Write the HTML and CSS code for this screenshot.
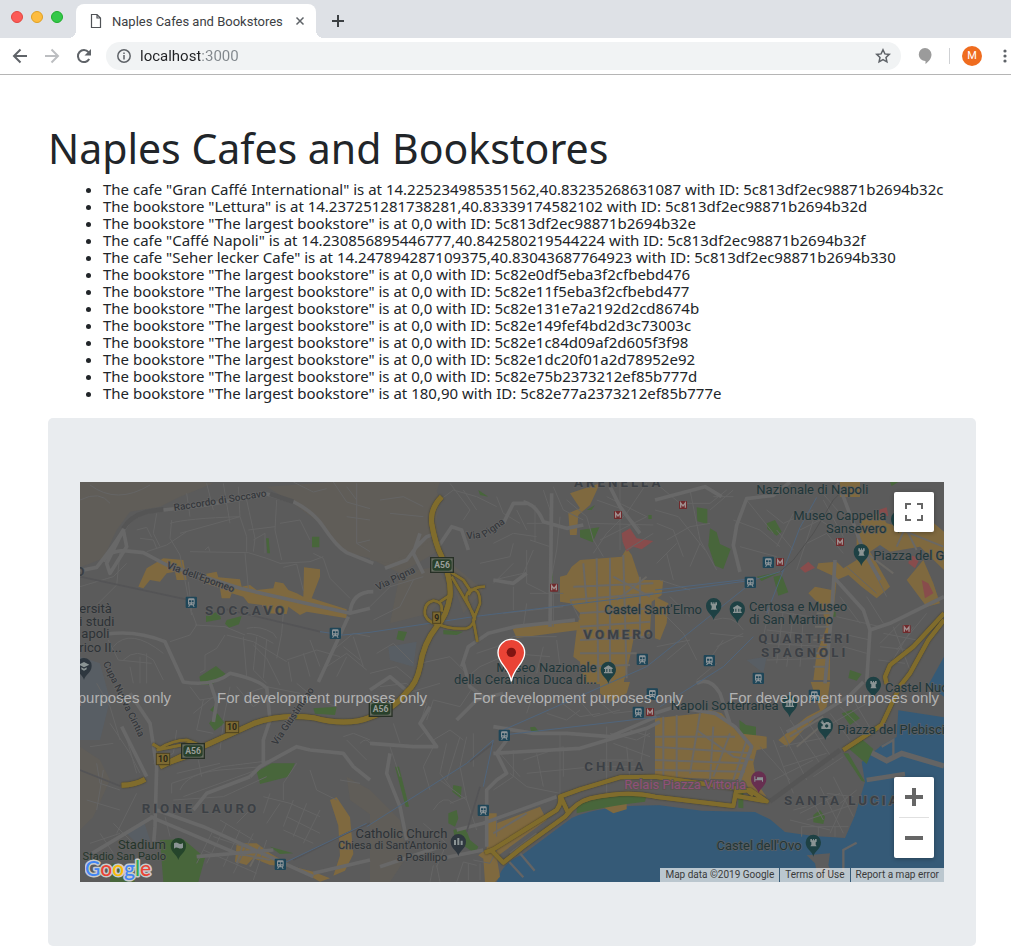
FILE: index.html
```html
<!DOCTYPE html>
<html lang="en">
<head>
<meta charset="utf-8">
<title>Naples Cafes and Bookstores</title>
<link rel="stylesheet" href="styles.css">
</head>
<body>
<header class="browser">
  <div class="tabstrip">
    <div class="lights"><span class="light red"></span><span class="light amber"></span><span class="light green"></span></div>
    <div class="tab">
      <svg class="doc" viewBox="0 0 12 16" aria-hidden="true"><path d="M1.500 1.500h5.500l3.500 3.500v9.500h-9zM7 1.500v3.500h3.500" /></svg>
      <span class="tab-title">Naples Cafes and Bookstores</span>
      <button class="bare close" aria-label="Close tab"><svg viewBox="0 0 10 10"><path d="M1.500 1.500l7 7M8.500 1.500l-7 7"/></svg></button>
    </div>
    <button class="bare newtab" aria-label="New tab"><svg viewBox="0 0 12 12"><path d="M6 0v12M0 6h12"/></svg></button>
  </div>
  <div class="toolbar">
    <button class="bare nav" aria-label="Back"><svg viewBox="0 0 16 16"><path d="M15 8H2M8.500 1.500L2 8l6.500 6.500"/></svg></button>
    <button class="bare nav dim" aria-label="Forward"><svg viewBox="0 0 16 16"><path d="M1 8h13M7.500 1.500L14 8l-6.500 6.500"/></svg></button>
    <button class="bare nav" aria-label="Reload"><svg viewBox="0 0 16 16"><path d="M13.200 11A6 6 0 1 1 12.500 4.200"/><path class="solid" d="M15 1v6.500H8.500z"/></svg></button>
    <div class="omnibox">
      <svg class="info" viewBox="0 0 14 14" aria-hidden="true"><circle cx="7" cy="7" r="6.200"/><path d="M7 6v4.500M7 3.400v1.600"/></svg>
      <input class="url" type="text" aria-label="Address" value="localhost:3000">
      <button class="bare star" aria-label="Bookmark"><svg viewBox="0 0 16 16"><path d="M8 1.800l1.900 4.100 4.400.5-3.300 3 .9 4.400L8 11.600l-3.900 2.200.9-4.400-3.300-3 4.400-.5z"/></svg></button>
    </div>
    <button class="bare chat" aria-label="Extension"><svg viewBox="0 0 14 16"><path d="M7 0a6.500 6.500 0 0 1 6.500 6.500C13.500 11 10 14 7.500 16v-3A6.500 6.500 0 1 1 7 0z"/></svg></button>
    <span class="divider"></span>
    <button class="avatar" aria-label="Profile">M</button>
    <button class="bare more" aria-label="Menu"><svg viewBox="0 0 4 14"><circle cx="2" cy="2" r="1.600"/><circle cx="2" cy="7" r="1.600"/><circle cx="2" cy="12" r="1.600"/></svg></button>
  </div>
</header>

<main class="page">
  <h1>Naples Cafes and Bookstores</h1>
  <ul class="places">
    <li>The cafe "Gran Caffé International" is at 14.225234985351562,40.83235268631087 with ID: 5c813df2ec98871b2694b32c</li>
    <li>The bookstore "Lettura" is at 14.237251281738281,40.83339174582102 with ID: 5c813df2ec98871b2694b32d</li>
    <li>The bookstore "The largest bookstore" is at 0,0 with ID: 5c813df2ec98871b2694b32e</li>
    <li>The cafe "Caffé Napoli" is at 14.230856895446777,40.842580219544224 with ID: 5c813df2ec98871b2694b32f</li>
    <li>The cafe "Seher lecker Cafe" is at 14.247894287109375,40.83043687764923 with ID: 5c813df2ec98871b2694b330</li>
    <li>The bookstore "The largest bookstore" is at 0,0 with ID: 5c82e0df5eba3f2cfbebd476</li>
    <li>The bookstore "The largest bookstore" is at 0,0 with ID: 5c82e11f5eba3f2cfbebd477</li>
    <li>The bookstore "The largest bookstore" is at 0,0 with ID: 5c82e131e7a2192d2cd8674b</li>
    <li>The bookstore "The largest bookstore" is at 0,0 with ID: 5c82e149fef4bd2d3c73003c</li>
    <li>The bookstore "The largest bookstore" is at 0,0 with ID: 5c82e1c84d09af2d605f3f98</li>
    <li>The bookstore "The largest bookstore" is at 0,0 with ID: 5c82e1dc20f01a2d78952e92</li>
    <li>The bookstore "The largest bookstore" is at 0,0 with ID: 5c82e75b2373212ef85b777d</li>
    <li>The bookstore "The largest bookstore" is at 180,90 with ID: 5c82e77a2373212ef85b777e</li>
  </ul>

  <section class="panel">
    <div class="map">
      <svg class="canvas" viewBox="0 6 2592 1200" preserveAspectRatio="xMidYMid slice" role="img" aria-label="Map of Naples">
        <defs>
          <g id="pin"><path d="M0 34C-3 18-23 12-23-9a23 23 0 0 1 46 0C23 12 3 18 0 34z"/></g>
          <g id="tower"><path class="glyph" d="M-9-19h5v4h3v-4h3v4h3v-4h5v8l-3 2v7l3 5H-9l3-5v-7l-3-2z"/></g>
          <g id="museum"><path class="glyph" d="M0-21l13 8v3h-3v9h3v4h-26v-4h3v-9h-3v-3zM-6-10v9h3v-9zM3-10v9h3v-9z" fill-rule="evenodd"/></g>
          <g id="train"><rect x="-17" y="-17" width="34" height="34" rx="3" fill="#1f4658"/><path fill="#8d9599" fill-rule="evenodd" d="M-10-8q0-4 4-4H6q4 0 4 4V4q0 3-3 4l3 5H6L4 9H-4l-2 4h-4l3-5q-3-1-3-4zM-7-6v6h6v-6zM1-6v6h6v-6zM-6 3v3h3V3zM3 3v3h3V3z"/></g>
          <g id="metro"><rect x="-12" y="-12" width="24" height="24" rx="2" fill="#702a2c"/><path d="M-7 8V-6L0 3 7-6V8" fill="none" stroke="#a09090" stroke-width="4"/></g>
        </defs>
        <rect width="2592" height="1212" fill="#5b5b5b"/>

        <g class="hill">
          <path d="M0 0H320L400 10 300 50 240 80 150 95 110 150 70 235 0 262z"/>
          <path d="M560 20L760 6H1080L1060 60 1080 210 960 280 870 235 790 215 720 130 640 70z"/>
          <path d="M960 280L1070 260 1110 330 1050 400 930 430zM1090 230L1210 330 1150 400zM870 240L930 250 1060 180 1080 60 1060 6H870z"/>
          <path d="M0 800L60 840 90 900 40 1010 0 1050zM800 890L870 930 880 1010 810 960zM870 930L960 1020 980 1130 930 1206H870zM0 950L60 960 0 1010z"/>
        </g>
        <g class="pale">
          <path d="M0 530L60 550 90 660 60 780 0 780zM925 500L1010 485 1000 560 930 540zM140 1060L190 1020 210 1080 170 1090zM2000 540L2060 530 2050 580zM2380 180L2420 160 2430 200 2400 210z"/>
        </g>

        <path class="water" d="M1250 1212Q1260 1150 1330 1122L1475 1014Q1560 975 1740 976L1865 992 2025 996 2070 1018 2115 1056 2200 1068 2295 1074 2325 1006 2355 906 2345 846 2405 796 2450 771 2455 691 2592 712V1212zM2545 615L2592 530V650z"/>
        <g class="land">
          <path d="M2180 1126L2250 1120 2245 1156 2262 1190 2215 1200 2205 1150z"/>
          <path d="M1570 982L1640 968 1640 988 1600 1000z" class="shop"/>
        </g>
        <g class="pier">
          <path d="M2340 800L2420 842 2465 820 2592 858" stroke-width="16"/>
          <path d="M2360 900L2475 882" stroke-width="14"/>
          <path d="M2290 1190V1110L2330 1088M1320 1120L1364 1172M1288 1146L1330 1192M2405 800L2440 780V830" stroke-width="7"/>
        </g>

        <g class="park">
          <path d="M558 175l8 0 4 45-8 0zM696 170h22v32h-22zM378 408l40-15 5 25-45 8zM440 420l45-12-8 25-30 10-12-12zM358 590l50-32 30 25-45 32h-30z"/>
          <path d="M1500 150l58-8-20 45-38-15zM1410 278h9v30h-9zM955 452l26 4-10 26-22-4zM1090 450l60 5-20 10-40-2zM1195 30l30 20-25-5zM1520 90l25-15-10 15zM1705 105h10v12h-10z"/>
          <path d="M1850 82l32 5v45l-30-8zM1890 145l20 12 10 35 32 15-22 60-25-10-20-60zM2060 130l25-10 20 35-15 12-28-20zM2080 290l25-5 20 52-30 10zM2030 290l75-15-60 28zM2365 280l12-5 5 15-12 4zM2310 570l35 12-15 20-25-8zM2430 6h25l-20 12zM2255 395h12v15h-12z"/>
          <path d="M387 730l25-30 22 30-30 22zM390 690l20-20-5 30zM530 875l45-25 70 0-20 40-85 22zM700 685l70-5-5 25-60-4zM240 1080l70-2 65 55-20 73H250zM570 1100l70 20-40 2zM95 1150l50 10 20 46H90zM370 606h35l-15 10z"/>
          <path d="M945 860h12l30 120-10 0zM1120 915l25 5-3 35-25-20zM1105 1000l25-10 5 25-10 25-20-10zM1120 1050l35-10 15 40 25 20-10 20-60-40zM1350 742l15-2 16 20-25 2zM1490 975Q1580 940 1700 945L1695 965Q1600 975 1490 1000z"/>
          <path d="M1978 720l20 15 30 5v35l-48-10zM2285 700l30-10 25 25-30 20zM2305 805l40-28 35 30-20 45zM2290 820l15 0 50 85-10-2zM2200 1005l20-15 15 20-5 22-30-5zM1975 935h15v50l-15-2z"/>
        </g>

        <g class="shop">
          <path d="M175 320L200 265 250 235 310 240 320 300 290 300 285 275 260 280 240 305 210 300 190 325zM360 285L410 275 415 292 480 298 485 320 510 315 530 330 580 325 585 305 610 310 625 330 650 340 670 350 672 262 720 268 720 290 695 355 800 388 800 415 680 395 660 405 625 380 620 402 560 400 545 375 505 370 490 350 455 340 450 355 425 355 420 325 365 305z"/>
          <path d="M1470 40L1560 10 1530 75 1495 105 1490 165 1470 165 1465 100 1500 85zM1500 240L1625 230 1640 205 1655 225 1680 300 1750 300 1745 345 1715 365 1710 460 1660 480 1650 530 1630 612H1510L1500 545 1480 530 1490 450 1500 400 1470 370 1440 365 1440 290 1460 285 1475 260z"/>
          <path d="M1295 440L1495 425V450L1310 474zM1560 606L1650 606 1640 640 1590 665 1560 640z"/>
          <path d="M2280 6h60v45h-60zM2480 60L2592 155V270L2520 200 2430 215 2400 195 2370 215 2390 250 2430 320 2390 355 2345 320 2305 285 2270 300 2260 400 2250 480 2250 600 2200 600 2210 520 2240 440 2225 380 2185 340 2205 320 2255 330 2265 290 2210 265 2215 250 2270 245 2290 265 2330 240 2330 170 2350 110 2400 100 2420 130 2440 135 2480 155z"/>
          <path d="M2480 300L2530 240 2560 310 2580 370 2540 380zM1725 350l40 20-5 60-20 50-15-5z"/>
          <path d="M2192 606L2250 606 2240 680 2120 800 2095 780 2180 710 2220 690zM1725 715L1865 700 1890 690 1925 700 1975 760 2060 770 2060 805 2030 810 2020 850 2030 910 2060 950 2010 930 1990 900 1725 890z"/>
          <path d="M470 1090l60 0 40 30 70 40-70-5-50-20-20 20-35-10zM640 1160l60 15 50 20-30 10zM750 960l20-8 40 60 10 110-25 50-35 15 20-60-5-90z"/>
          <path d="M1225 1000h25l0 30 130-50 20 40-150 110 10 60-15 16h-30l-5-70-15-10 25-20z"/>
        </g>
        <g class="rose"><path d="M1625 160l25-15 20 30 50 8-35 25-25-8-20 15-12-30zM2160 265l25-20 20 18-30 15zM2525 300l20 10 15 30-25 15zM2490 225l30 10-15 30-20-15zM2395 90l25-8 5 25-25 5z"/></g>

        <g class="street">
          <path d="M170 150l30-8 15 30M180 175l40 5 10 25M230 100l-10 60 20 40M275 120l-5 55 30 50 35 180M270 130Q320 115 480 110l-5-90M300 160l180-50M480 110l20 60v45M320 40l10 70M380 10l20 80M430 10l20 120M500 60l25 115-5 40M330 215L505 218 560 235 600 250 690 245M505 150l80-10M520 180l35-20v60M590 60l-5 90 20 90M600 130l60-10 30 60M700 220l30 15 20 60 60 60M690 245l40-15M610 262l40-10 20 80M495 220l10 105M325 305l10 90 15 40M345 435l90 5 60 25M270 485l60-20 20-30M435 465l-25 40-35 20v45l-15 8M440 465l80 20 100 60M490 470l10 120M520 495l40 40 40 80M530 470l-10 100 40 40M560 480l-10 115M610 400l-5 60-15 75M500 445q40-10 80 15l10 15M500 460q30 0 80 30M620 540l90-30 70 20M625 545l10 60M670 520l20 70M690 480l30 80M760 510l60-50 50 10M790 500l50 40M740 560l60-40 60 50M770 590l30-60M820 470l30 90M85 480l30 60 100 10M130 540q40-40 90 0l30 60M150 560l10 50M180 530v80M200 520v90M100 500q50-60 150 20M0 320l100-30 40-40M120 215l-10 100-60 60M200 215l60-20 60-40M375 210l10-10 5 15"/>
          <path d="M760 6l40 60 70 20M800 20l30 40M830 10v180l40-10M800 110l70 10M830 190l40 25M640 6l60 30 40-10M0 60q60-30 90 10M30 15q80 60 180 0"/>
          <path d="M1080 60l40-30 70 20 60 30M1110 10l60 80-20 30M1150 30l40 60M1250 50l20 50 50 30M1310 90l30 60M1340 130h75M1365 75v110M1350 180l60 20M1390 30l20 60v100M1420 20l30 70 60 30M1440 110l-10 100-15 80M1460 60l60 50 20 70 30 50M1550 60l70 25 60 60M1620 10v200M1580 50l120 60M1700 10l-60 90-60 60-40 60M1530 130l190 5M1560 180l140-70M1640 210l80-50M1240 190l60-30 70 10M1200 250l90-20 10-40M1240 300l90-20 30-70M1240 310l60-60M1340 210v100l60 30M1300 320v70M1350 340h100M1270 400l180-20M1330 440l10-70M1420 440V340M1500 420l-30-60M1190 520l60-20 50-30 130 0M1200 560l90-40 120 10M1280 600l40-80M1370 580l20-80M1440 560l-10-80M1150 600l50-40M870 380l60-60 100-30M880 420l80-40 40-80M900 60l70-10 60 30M930 100l100 10M890 520l50-30 60 60M870 580l80-20 60 50M1020 550l90-20 60 60"/>
          <path d="M1740 20l60 50 90 0 50-40M1725 90l70 20 80 100M1730 130l50 20 30 80M1760 180l70-40 60-10M1730 250l60-60M1780 300l-20-80M1830 260l30-70M1740 300l90 30M1770 350l60 60M1830 30l30 150 50 90M1890 90l70-60M1900 50l60 0M1960 120l80 30 60 50M1980 200l110 30M2000 60l80 100M2060 90l50 40 90-40M2090 150l50 60M2140 100l-50 100M2160 150l60-30 60 40M2180 190l60-30 50 60M2200 120l-50 150M2230 60l60 110M2220 30l60 70 70 10M2070 380l-20 90M2060 390l130 20M2110 390l-20 160M2140 400l-20 160M2170 410l-10 150M2060 450l190 20M2055 490l190 10M2060 540l180-5M2270 410l130 30M2280 460l90 20M2290 500l70 20M2360 350l50 80M2280 350l60 80M2390 290l30 60M2300 260l90 80M2440 440l50 130M2410 460l100 20M2400 500l90 10M2395 540l80 10M2460 430l-60 60M2500 440l-80 130M2540 400l-90 110M1750 400l60 60 40 80M1730 500l100-20M1760 540l60-50M1900 420q60-20 90 30M1890 460l100 10M1910 500l80-40M1880 550l50-70M1850 600l60-50"/>
          <path d="M50 610l40 70 30 100M90 730l60 90 30 60M130 740l40 140M30 800l70-10M50 850l10 60 60 20M70 870l-20 120M20 960l100 30M30 1090l90-30M60 1060l40 60M100 1030l60 60M170 940l-60 120M290 750l-10 70-60 30M330 620l30 40 60-10M340 700l60-50M370 660l-20 90 50 10M450 620l-20 100M470 620l50 60M275 940l0-30 150-50 160-20M290 880l130-30M300 930q20-50 120-60l130-10M310 950l220-80M280 960l150-10 130-60M355 840l10 50M430 730l-10 80M500 640l60-20 100 20M520 680l40-30M610 650l70 0M650 610l60 50 60 20M650 850l-40 60 0 50M690 870l20 60 60 30M550 950l80 20 90 40M600 970l-40 60M570 940l-20 60M640 960l-30 80M680 970l-40 100M720 990l-50 100M620 1010l100 50M610 1050l90 40M400 1050l-50 100M440 1030l-60 120M480 1050l-50 110M520 1060l-60 120M560 1080l-40 120M370 1110l160 70M400 1070l150 50M420 1020l100 60M470 1030l40-40M790 770l30-10 50 20M800 780l60 60M840 790q20-20 30 0M780 900l60 10M255 1010l15 60"/>
          <path d="M900 620l80-10 60 60-20 60M980 640l100-30M1040 720l20-60 80 20 40-60M1060 780l50-30 40 30M1010 780l30-30M1060 800l-30 60 20 70M1100 790l-20 90 30 40M1140 770l-40 130M1160 770l-20 90 20 100M1180 760l0 100M1080 900l80 60 30 90M1110 970l50-20M1060 990q30-50 60-20M1030 1030l70 60-30 70M930 800l30 90M940 730l20 60M1260 820l60 70M1300 810v80l-60 40M1330 840l120-40 0 90M1370 820l20 100M1340 880l200-20M1290 880l50 40 100 20M1440 760v200M1580 740v200M1640 800l10 100M1700 740l-20 120M1560 840h100M1550 860h120M1600 790l110 40M1650 750l60 20M1400 700l60 20 40-30M1420 650l80 60 60-10M1480 640l60 70 80-20M1530 640l70 60 90-10M1360 640l-20 60M1590 760l80 20 40-20M1180 1140l50 10 30-60M1130 1206l20-60 40 10M1165 1200v-50M1200 1200v-50M1080 1206l-10-50M1050 1206l10-50M1250 1010v60"/>
          <path d="M2080 780l60 160M2040 800l90 100M2100 740l80 160M2130 720l90 130M2180 720l80 120M2100 800l150-30M2110 860l130-40M2080 900l120-60M2290 830l-90 60M2180 1020l150-50M2160 1000l120-60M2220 920l70 140M2260 890l60 120M2190 950l40 70M2130 1020l120 30M2140 990l40-10M2165 1040h140M2165 1040v30M2215 1040v30M2265 1040v30M2240 940l80 10M2280 970l50-40M2250 1060l50-110M2240 740l120-70M2250 700l60 80M2320 660l60 100M2280 680l60 60"/>
        </g>
        <g class="street block">
          <path d="M1510 250l10 120M1550 235l5 370M1590 235l0 370M1630 225l10 370M1480 320l240-10M1470 360l250-20M1500 400l210-15M1500 440l210-15M1500 480l200-10M1500 520l170 0M1500 560l150-5M1600 290l110 60M1700 290l-90 70M1680 290v180M1725 770l240 0M1725 800l290 20M1750 710l0 180M1790 705l0 190M1860 700l-30 180M1900 740l-10 160M1950 760l-50 130M2000 780l-40 120M1725 840l270 10M1725 870l270 5M1850 750l110 80 60 10M2130 770l100-60M2150 800l70-60M2360 220l80 60M2450 90l60 120M2500 90l-50 110M2440 140l150 60M2260 400h-50M2255 440h-50M2250 480h-50M2245 520h-40M2245 560h-45M470 1120l100 20M490 1090l-20 60M540 1100l-30 60M1240 1060l100-60M1280 1080l100-60M1290 1120l80-60"/>
        </g>
        <g class="road">
          <path d="M0 272L50 262Q100 200 130 150Q150 110 200 95L250 90 380 75 560 42 640 65Q700 95 730 140 770 200 800 218L880 250M70 245Q80 215 130 212L190 218 260 255 480 325 810 400 870 385M130 150l-50 100 10 30 50-80-10-50M80 462Q170 450 255 485L310 606Q400 620 450 580 540 600 560 625M810 400Q815 335 880 335M805 410L715 606"/>
          <path d="M915 265L980 240 1010 200 1040 170 1070 160M1020 160l-20 60 30 60M1075 200l40-60 30 10 20 60M1330 65q40 10 60 60l70 20 50-10M1270 130l30-60 40 0M1415 40l-5 400M1145 560l20-60 60-40 80-20 180-20M1150 550l20 70 40 30M1240 300l60 10 40-30M1590 20l30 60 60 80"/>
          <path d="M2130 6l-50 40-80 10-30 80-10 60 20 80M1725 60l150-40 50 30M2270 10l20 40 60 160 50 90M2265 240l-10 160-20 210M2592 350L2430 430 2370 450 2360 606M2370 450l-20-60-90-100"/>
          <path d="M150 640l60 90 20 130-5 180-5 60M125 740l75 150M230 990l140 50 330 150M220 1010L20 1130M470 1120l-260-110M690 810l-40-10-110 60-30 30M870 900l-50-40-30-40-100-10M390 606l20 60-10 60M560 620l10 100-20 60v70M510 890l-130 50-40 50M870 1140l-170 40M350 1130l230-20"/>
          <path d="M870 790l130 10 70 0-50-70 30-50M930 820l-10 60 40 100 20 100M870 630l60-40 60 50M1220 1100V930l30-30 30-20-30-60 30-40V740M1240 820l260-15 200-60 40-20M1060 1140l150-30M1130 1050l80-20 220-80M900 1160l180-60M1240 740l120 20 100 0 130 10 140-60M1130 720l60-60 80-20"/>
          <path d="M1725 700l60-20 120 20 60 40 50 60-40 110M1850 610q40-20 70 30l30 90M2350 606l-40 40-80 50-110 60"/>
        </g>
        <path class="tunnel" d="M130 145Q150 110 200 95L250 88M570 42L640 65M2070 964L2280 810"/>
        <g class="rail"><path d="M0 290L350 365M440 388L720 455M0 870L120 918M1170 845L1240 790M1160 1055L1200 920M640 1140L800 1060 870 1030"/></g>
        <g class="transit">
          <path d="M720 455l70 10 80-8L1180 410 1650 352 2020 300 2110 272M2110 272L2060 400M2110 272l50-130 50-90M1270 750L1700 560 2000 320M1270 765L1740 710M1240 780l-30 140M860 1040L1160 850 1240 780M600 1155L860 1030M1725 330L2000 298M1740 680l190-120 90-90"/>
        </g>
        <path d="M2100 275L2140 240 2200 160 2260 60 2300 20" fill="none" stroke="#505050" stroke-width="3"/>

        <g class="edge"><use href="#highways"/></g>
        <g class="gold" id="highways">
          <path d="M1085 50Q1050 85 1055 130 1065 190 1085 230 1115 300 1110 350 1100 410 1070 440 1030 490 1020 560 1010 610 980 636 940 690 870 712 800 740 700 713 600 701 520 731L300 831 240 860M195 898Q165 915 125 916" stroke-width="15"/>
          <path d="M1110 275L1150 300 1170 330M1115 290L1185 410Q1180 440 1160 445 1110 450 1070 430M1085 435Q1045 430 1035 405 1030 370 1060 362 1090 365 1085 395M1080 365l30-20M1165 370Q1150 350 1170 330 1200 320 1200 370L1180 420 1192 485M1165 345Q1175 320 1215 320M1165 370l20 50" stroke-width="7"/>
          <path d="M218 792L240 805Q280 780 320 780L370 800M230 810L330 790M240 860L340 825" stroke-width="8"/>
          <path d="M1215 1118L1240 1108 1430 990Q1445 970 1440 950L1500 928 1620 892 1725 890 2000 930 2020 945M1235 1112L1270 1148 1330 1100 1455 1010Q1490 965 1530 955 1640 930 1725 950L1960 978 1968 935 2010 930 2060 964 1970 948M1440 945l25 55" stroke-width="12"/>
          <path d="M2592 400L2500 500 2430 555 2415 590 2420 612M2592 420L2545 480 2490 580 2460 618 2405 735 2290 810" stroke-width="12"/>
        </g>

        <g class="area">
          <text x="375" y="404">SOCCAVO</text>
          <text x="1482" y="20">ARENELLA</text>
          <text x="1510" y="476">VOMERO</text>
          <text x="2035" y="489">QUARTIERI</text>
          <text x="2043" y="531">SPAGNOLI</text>
          <text x="1513" y="873">CHIAIA</text>
          <text x="185" y="1000">RIONE LAURO</text>
          <text x="2112" y="975">SANTA LUCIA</text>
          <text x="-14" y="288">O</text>
        </g>
        <g class="way">
          <text transform="translate(283 93) rotate(-9)">Raccordo di Soccavo</text>
          <text transform="translate(258 264) rotate(20)">Via dell'Epomeo</text>
          <text transform="translate(1160 178) rotate(-6)">Via</text><text transform="translate(1214 174) rotate(-36)">Pigna</text>
          <text transform="translate(893 332) rotate(-26)">Via Pigna</text>
          <text transform="translate(68 550) rotate(64)">Cupa Nuova Cintia</text>
          <text transform="translate(590 798) rotate(-56)">Via Giustiniano</text>
        </g>
        <g class="poi gray">
          <text x="-2" y="399">ersità</text><text x="-2" y="439">i studi</text><text x="4" y="475">apoli</text><text x="-2" y="517">rico II...</text>
          <text x="1102" y="1073" text-anchor="end">Catholic Church</text>
          <text class="minor" x="1102" y="1108" text-anchor="end">Chiesa di Sant'Antonio</text>
          <text class="minor" x="1102" y="1142" text-anchor="end">a Posillipo</text>
        </g>
        <g class="poi forest">
          <text x="258" y="1107" text-anchor="end">Stadium</text>
          <text class="minor" x="258" y="1139" text-anchor="end">Stadio San Paolo</text>
        </g>
        <g class="poi teal">
          <text x="1550" y="575" text-anchor="end">Museo Nazionale</text>
          <text x="1550" y="612" text-anchor="end">della Ceramica Duca di...</text>
          <text x="1866" y="402" text-anchor="end">Castel Sant'Elmo</text>
          <text x="2007" y="392">Certosa e Museo</text><text x="2007" y="431">di San Martino</text>
          <text x="2029" y="43">Nazionale di Napoli</text>
          <text x="2419" y="119" text-anchor="end">Museo Cappella</text><text x="2419" y="158" text-anchor="end">Sansevero</text>
          <text x="2380" y="239">Piazza del Gesù</text>
          <text x="2415" y="636">Castel Nuovo</text>
          <text x="2096" y="691" text-anchor="end">Napoli Sotterranea</text>
          <text x="2272" y="761">Piazza del Plebiscito</text>
          <text x="2165" y="1109" text-anchor="end">Castel dell'Ovo</text>
        </g>
        <g class="poi plum"><text x="1998" y="926" text-anchor="end">Relais Piazza Vittoria</text></g>

        <g fill="#1e4144">
          <use href="#pin" x="1585" y="577"/><use href="#museum" x="1585" y="577"/>
          <use href="#pin" x="1901" y="386"/><use href="#tower" x="1901" y="386"/>
          <use href="#pin" x="1972" y="396"/><use href="#museum" x="1972" y="396"/>
          <use href="#pin" x="2344" y="224"/><use href="#tower" x="2344" y="224"/>
          <use href="#pin" x="2456" y="126"/>
          <use href="#pin" x="2380" y="622"/><use href="#tower" x="2380" y="622"/>
          <use href="#pin" x="2129" y="678"/><use href="#museum" x="2129" y="678"/>
          <use href="#pin" x="2236" y="746"/><path class="glyph" fill-rule="evenodd" d="M2228 729h7l3-3h8l3 3h3v18h-28v-8h4zM2240 733a5 5 0 1 0 .1 0zM2222 725h3v-4h3v4h4v3h-4v4h-3v-4h-3z"/>
          <use href="#pin" x="2200" y="1096"/><use href="#tower" x="2200" y="1096"/>
        </g>
        <g fill="#2e373f"><use href="#pin" x="1135" y="1094"/><path class="glyph" d="M1122 1080h6v15h-6zM1132 1074h6v21h-6zM1142 1082h6v13h-6z"/><use href="#pin" x="12" y="566"/><path class="glyph" d="M-4 554l16-8 16 8-16 8zM4 562l8 4 8-4v6l-8 4-8-4z"/></g>
        <g fill="#25452b"><use href="#pin" x="295" y="1106"/><path class="glyph" d="M282 1090q7-5 13 0t14-1v14q-7 5-14 1t-13 2z"/></g>
        <g fill="#672f50"><use href="#pin" x="2036" y="906"/><path class="glyph" d="M2023 889h3v9h5v-6h18v13h-3v-4h-20v4h-3z"/></g>

        <use href="#train" x="334" y="367"/><use href="#train" x="766" y="460"/><use href="#train" x="1687" y="538"/><use href="#train" x="2065" y="247"/><use href="#train" x="2011" y="307"/><use href="#train" x="1888" y="542"/><use href="#train" x="2035" y="595"/><use href="#train" x="1273" y="766"/><use href="#train" x="1675" y="697"/><use href="#train" x="1717" y="642"/><use href="#train" x="2203" y="646"/><use href="#train" x="1210" y="991"/><use href="#train" x="601" y="1153"/>
        <use href="#metro" x="1614" y="105"/><use href="#metro" x="1422" y="323"/><use href="#metro" x="1809" y="75"/><use href="#metro" x="2280" y="186"/><use href="#metro" x="2100" y="246"/><use href="#metro" x="2480" y="447"/><use href="#metro" x="1710" y="696"/>

        <g class="shield">
          <g transform="translate(1086 255)"><rect class="rim" x="-34" y="-22" width="68" height="44"/><rect class="core" x="-29" y="-17" width="58" height="34" rx="9"/><text y="9">A56</text></g>
          <g transform="translate(339 813)"><rect class="rim" x="-34" y="-22" width="68" height="44"/><rect class="core" x="-29" y="-17" width="58" height="34" rx="9"/><text y="9">A56</text></g>
          <g transform="translate(902 687)"><rect class="rim" x="-34" y="-22" width="68" height="44"/><rect class="core" x="-29" y="-17" width="58" height="34" rx="9"/><text y="9">A56</text></g>
        </g>
        <g class="exit">
          <g transform="translate(1070 413)"><rect x="-12" y="-17" width="24" height="34"/><text y="9">9</text></g>
          <g transform="translate(456 741)"><rect x="-20" y="-17" width="40" height="34"/><text y="9">10</text></g>
          <g transform="translate(249 837)"><rect x="-20" y="-17" width="40" height="34"/><text y="9">10</text></g>
        </g>

        <g class="watermark">
          <text x="-357" y="670">For development purposes only</text>
          <text x="411" y="670">For development purposes only</text>
          <text x="1179" y="670">For development purposes only</text>
          <text x="1947" y="670">For development purposes only</text>
        </g>
        <path d="M1294 604C1288 564 1254 551 1254 518a40 40 0 0 1 80 0C1334 551 1300 564 1294 604z" fill="#ea4335" stroke="#fff" stroke-width="4"/>
        <circle cx="1294" cy="517" r="14" fill="#811411"/>
      </svg>
      <a class="brand" href="#google" aria-label="Google"><svg viewBox="0 0 68 26"><text x="0" y="20"><tspan class="b">G</tspan><tspan class="r">o</tspan><tspan class="y">o</tspan><tspan class="b">g</tspan><tspan class="g">l</tspan><tspan class="r">e</tspan></text></svg></a>
      <button class="control fullscreen" aria-label="Toggle fullscreen view"><svg viewBox="0 0 18 18"><path d="M0 6V0h6v2H2v4zM12 0h6v6h-2V2h-4zM0 12v6h6v-2H2v-4zM16 12v4h-4v2h6v-6z"/></svg></button>
      <div class="control zoom">
        <button aria-label="Zoom in"><svg viewBox="0 0 18 18"><path d="M7 0h4v7h7v4h-7v7H7v-7H0V7h7z"/></svg></button>
        <span class="rule"></span>
        <button aria-label="Zoom out"><svg viewBox="0 0 18 18"><path d="M0 7h18v4H0z"/></svg></button>
      </div>
      <div class="credits"><span>Map data ©2019 Google</span><a href="#terms">Terms of Use</a><a href="#report">Report a map error</a></div>
    </div>
  </section>
</main>
</body>
</html>
```
FILE: styles.css
```css
* { box-sizing: border-box; }
body { margin: 0; background: #fff; color: #212529; font-family: "Noto Sans", sans-serif; }
svg { display: block; }
button { font: inherit; cursor: pointer; }

/* Browser bars */
.browser { font-family: Roboto, sans-serif; border-bottom: 1px solid #b5b5b5; }
.bare { border: 0; padding: 0; background: none; flex: none; color: #5f6368; }
.bare svg { width: 100%; fill: none; stroke: currentColor; stroke-width: 2; }
.tabstrip { display: flex; height: 38px; padding-top: 4px; background: #dee1e6; }
.lights { display: flex; gap: 8px; width: 76px; padding: 7px 0 0 11px; }
.light { width: 12px; height: 12px; border-radius: 50%; }
.red { background: #fc5b57; border: 1px solid #e2463f; }
.amber { background: #fdbc40; border: 1px solid #dfa023; }
.green { background: #34c84a; border: 1px solid #1dad2b; }
.tab { display: flex; align-items: center; width: 240px; padding: 0 11px 0 14px; background: #fff; border-radius: 8px 8px 0 0; position: relative; }
.tab::before, .tab::after { content: ""; position: absolute; bottom: 0; width: 8px; height: 8px; }
.tab::before { left: -8px; background: radial-gradient(circle at 0 0, transparent 8px, #fff 8px); }
.tab::after { right: -8px; background: radial-gradient(circle at 100% 0, transparent 8px, #fff 8px); }
.doc { width: 12px; height: 16px; fill: none; stroke: #505357; stroke-width: 1.2; }
.tab-title { flex: 1; margin-left: 10px; font-size: 13px; color: #3c4043; white-space: nowrap; }
.close { width: 10px; height: 10px; }
.close svg { stroke-width: 1.5; }
.newtab { width: 12px; height: 12px; margin: 11px 0 0 16px; color: #3c4043; }
.toolbar { display: flex; align-items: center; height: 36px; padding: 0 4px 0 12px; }
.nav { width: 16px; height: 16px; margin-right: 16px; }
.nav .solid { fill: currentColor; stroke: none; }
.dim { color: #bcbec1; }
.omnibox { display: flex; align-items: center; flex: 1; height: 28px; margin-left: -2px; padding: 0 10px; border-radius: 14px; background: #f1f3f4; }
.info { width: 14px; height: 14px; margin-left: 1px; fill: none; stroke: #5f6368; stroke-width: 1.5; }
.url { flex: 1; min-width: 0; margin-left: 9px; padding: 0; border: 0; outline: 0; font: 15px/20px Roboto, sans-serif; color: transparent; background: linear-gradient(90deg, #202124 60px, #80868b 60px); -webkit-background-clip: text; background-clip: text; }
.star { width: 16px; height: 16px; }
.star svg { stroke-width: 1.5; }
.chat { width: 14px; height: 16px; margin-left: 17px; }
.chat svg { fill: #9b9b9b; stroke: none; }
.divider { width: 1px; height: 16px; margin: 0 12px 0 17px; background: #cfd1d4; }
.avatar { width: 20px; height: 20px; padding: 0; border: 0; border-radius: 50%; background: #ef6c1f; color: #fff; font-size: 11px; line-height: 20px; }
.more { width: 4px; margin-left: 21px; }
.more svg { fill: #5f6368; stroke: none; }

/* Page */
.page { padding: 48px 35px 5px 48px; }
h1 { margin: 0 0 8px; font-size: 41px; line-height: 50px; font-weight: 400; }
.places { margin: 0 0 16px; padding-left: 55px; font-size: 15px; line-height: 17px; }
.panel { padding: 64px 32px; border-radius: 5px; background: #e9ecef; }

/* Map */
.map { position: relative; height: 400px; overflow: hidden; background: #5b5b5b; font-family: Roboto, sans-serif; }
.canvas { width: 100%; height: 100%; }
.hill { fill: #605d58; }
.pale { fill: #56616a; opacity: .6; }
.water { fill: #355a77; }
.land { fill: #5c5c5c; }
.pier { fill: none; stroke: #646464; }
.park { fill: #48663b; }
.shop { fill: #7f693f; }
.rose { fill: #884c4c; }
.street { fill: none; stroke: #656565; stroke-width: 3; stroke-linejoin: round; }
.block { stroke: #6a6864; stroke-width: 6; }
.road { fill: none; stroke: #686868; stroke-width: 11; stroke-linejoin: round; }
.tunnel { fill: none; stroke: #555; stroke-width: 14; }
.rail { fill: none; stroke: #545456; stroke-width: 5; }
.transit { fill: none; stroke: #50657c; stroke-width: 3; }
.gold { fill: none; stroke: #806c2c; stroke-linejoin: round; }
.edge { filter: drop-shadow(0 0 3px #40391c); }
.area { font-size: 40px; font-weight: 700; letter-spacing: 9px; fill: #3c4045; stroke: #606060; stroke-width: 4; paint-order: stroke; }
.way { font-size: 30px; font-weight: 500; fill: #35383c; stroke: #656565; stroke-width: 4; paint-order: stroke; }
.poi { font-size: 39px; stroke: #5f5f5f; stroke-width: 4; paint-order: stroke; }
.minor { font-size: 33px; }
.gray { fill: #2d3236; }
.forest { fill: #24352a; }
.teal { fill: #203639; }
.plum { fill: #90507a; stroke: #5a5650; stroke-width: 6; }
.glyph { fill: #8b9494; }
.shield text, .exit text { text-anchor: middle; font-size: 26px; font-weight: 700; }
.rim { fill: #666d61; stroke: #273026; stroke-width: 4; }
.core { fill: #29402b; }
.shield text { fill: #999e99; }
.exit rect { fill: #7d6a32; stroke: #4d4220; stroke-width: 3; }
.exit text { fill: #292619; }
.watermark { font-family: "Liberation Sans", sans-serif; font-size: 45px; fill: #b2b2b2; }
.brand { position: absolute; left: 5px; bottom: 0; width: 68px; }
.brand text { font: 500 21px Lato, sans-serif; stroke: #c9cbcc; stroke-width: 3px; stroke-linejoin: round; paint-order: stroke; }
.b { fill: #4285f4; }
.r { fill: #ea4335; }
.y { fill: #fbbc05; }
.g { fill: #34a853; }
.control { position: absolute; right: 10px; width: 40px; border: 0; border-radius: 2px; background: #fff; box-shadow: 0 1px 4px rgba(0, 0, 0, .3); }
.control svg { width: 18px; margin: auto; fill: #666; }
.fullscreen { top: 10px; height: 40px; padding: 0; }
.zoom { bottom: 24px; }
.zoom button { display: block; width: 40px; height: 40px; padding: 0; border: 0; background: none; }
.rule { display: block; height: 1px; margin: 0 5px; background: #e0e0e0; }
.credits { position: absolute; right: 0; bottom: 0; display: flex; gap: 1px; font-size: 10px; line-height: 14px; }
.credits > * { padding: 0 5px; background: rgba(245, 245, 245, .7); color: #3a3a3a; text-decoration: none; white-space: nowrap; }
```
